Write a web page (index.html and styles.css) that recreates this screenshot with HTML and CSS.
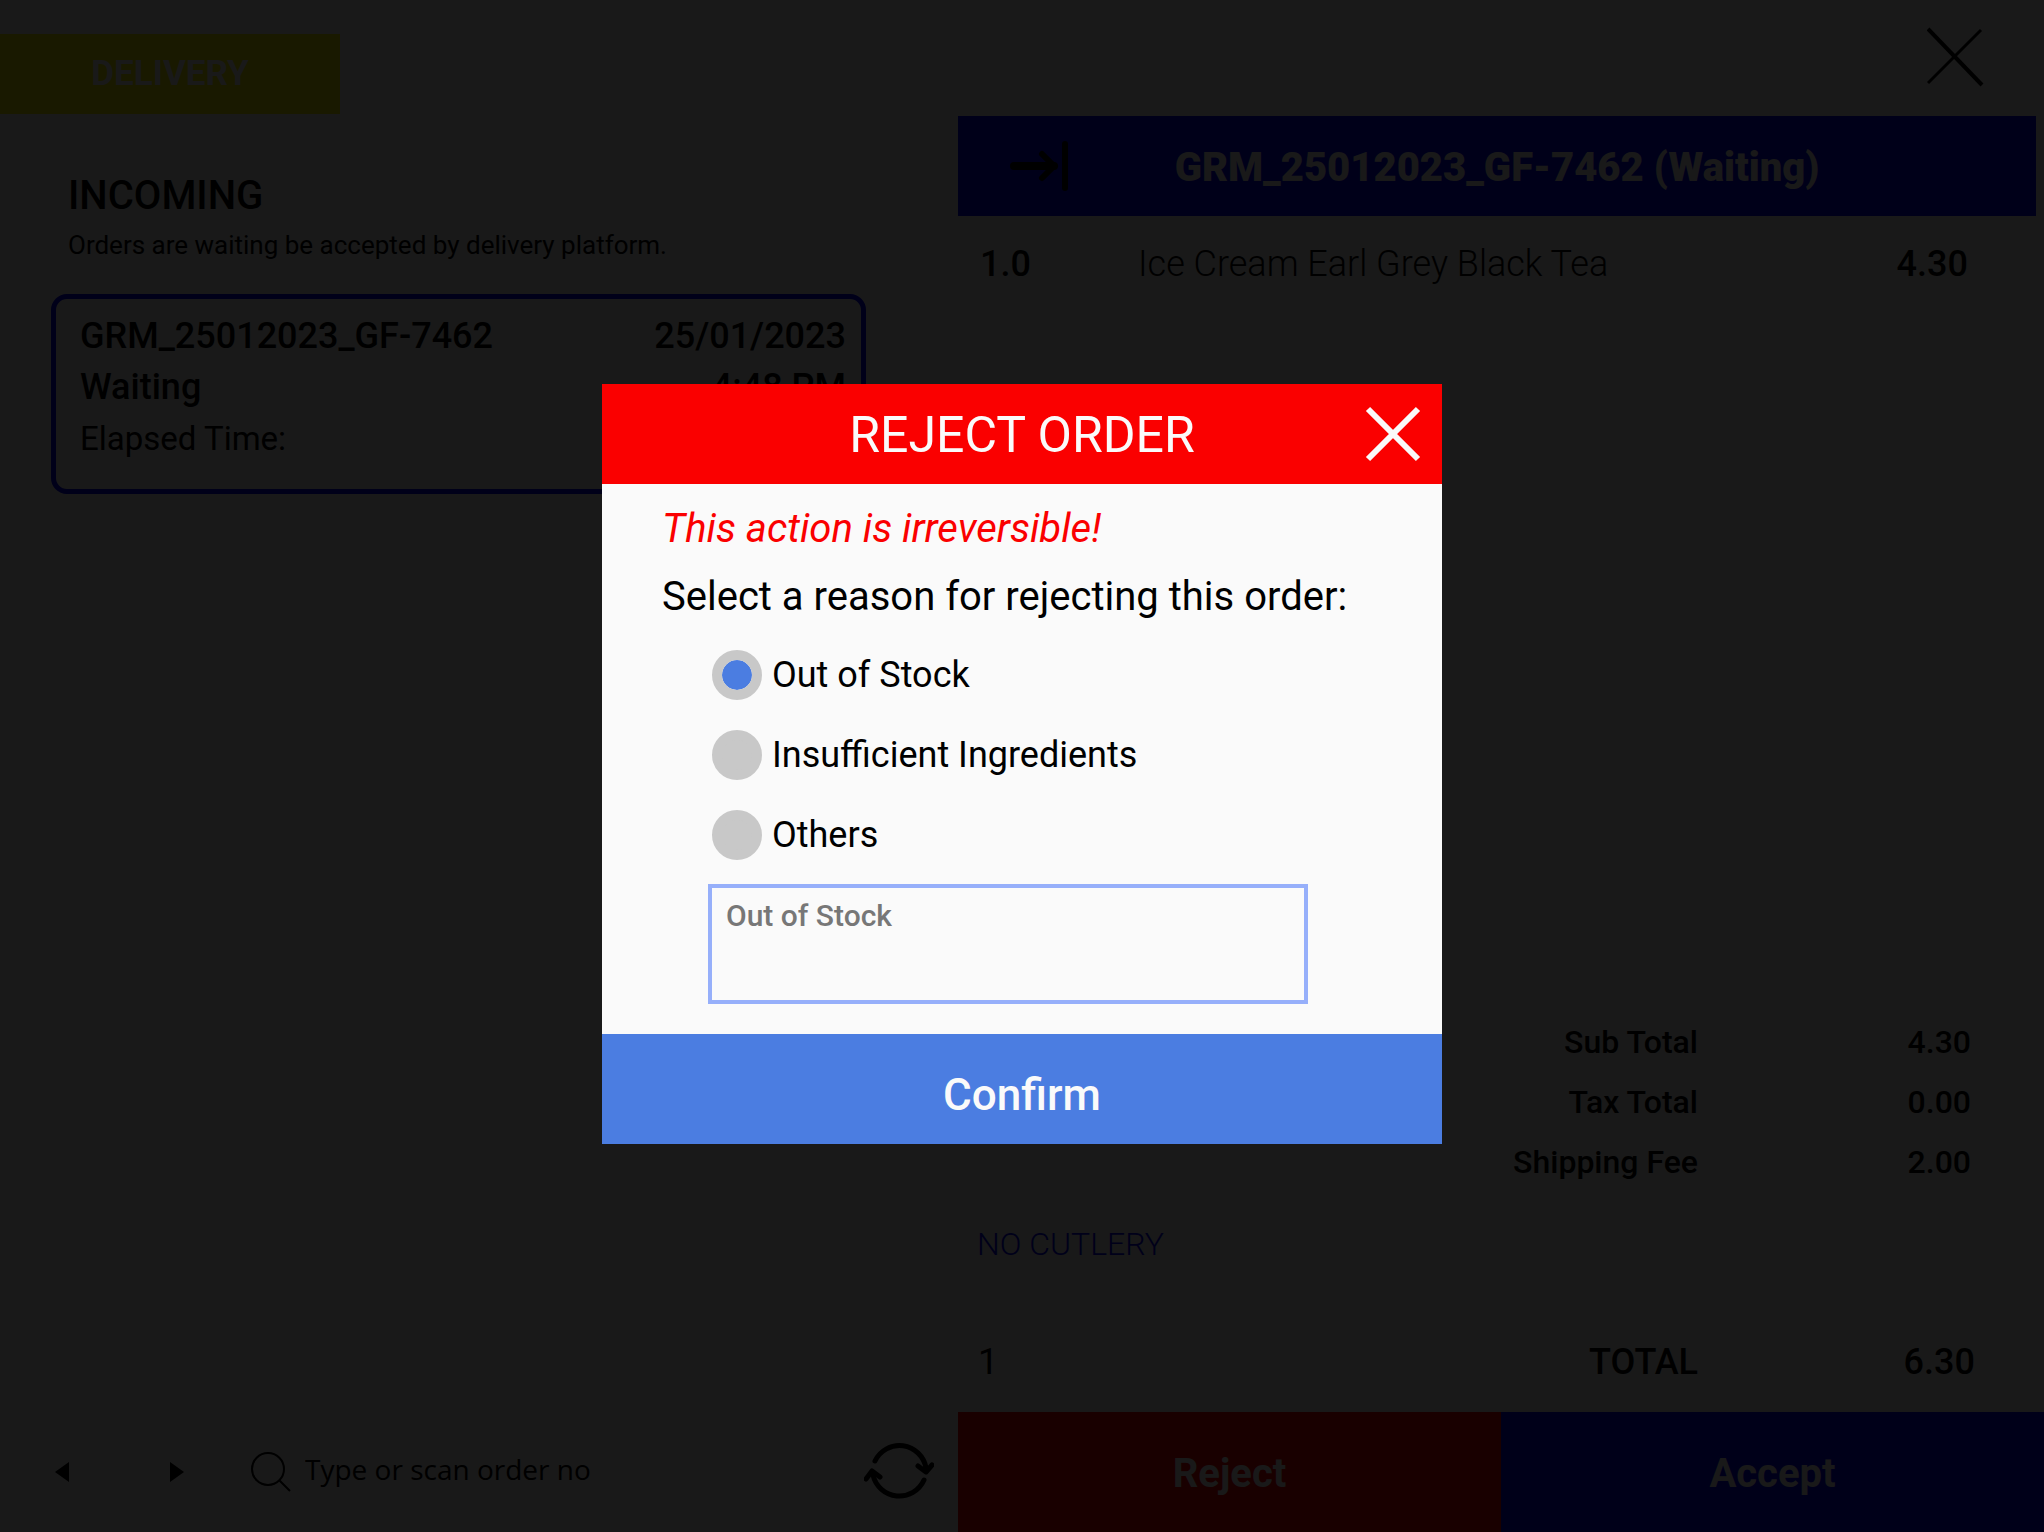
FILE: index.html
```html
<!DOCTYPE html>
<html lang="en">
<head>
<meta charset="utf-8">
<meta name="viewport" content="width=device-width, initial-scale=1">
<title>Delivery orders</title>
<link rel="stylesheet" href="styles.css">
</head>
<body>
<div class="app">
  <section class="orders">
    <h1 class="channel">DELIVERY</h1>
    <div class="incoming">
      <h2 class="incoming-title">INCOMING</h2>
      <p class="incoming-note">Orders are waiting be accepted by delivery platform.</p>
    </div>
    <article class="order-card">
      <div class="order-line"><span>GRM_25012023_GF-7462</span><span>25/01/2023</span></div>
      <div class="order-line"><span>Waiting</span><span>4:48 PM</span></div>
      <div class="order-line order-elapsed"><span>Elapsed Time:</span></div>
    </article>
    <div class="toolbar">
      <button class="page-button" type="button" aria-label="Previous page">
        <svg width="14" height="20" viewBox="0 0 14 20"><path d="M14 0v20L0 10z"/></svg>
      </button>
      <button class="page-button" type="button" aria-label="Next page">
        <svg width="14" height="20" viewBox="0 0 14 20"><path d="M0 0v20l14-10z"/></svg>
      </button>
      <label class="search">
        <svg width="42" height="42" viewBox="0 0 42 42" fill="none" stroke="#000" stroke-width="2"><circle cx="17" cy="18" r="16"/><path d="M28 29l11 11"/></svg>
        <input class="search-input" type="text" placeholder="Type or scan order no" aria-label="Order number">
      </label>
      <button class="refresh" type="button" aria-label="Refresh">
        <svg width="70" height="62" viewBox="0 0 70 62" fill="none" stroke="#000" stroke-width="5" stroke-linecap="round" stroke-linejoin="round"><path d="M11 20A27 27 0 0 1 62 27"/><path d="M54 25l8 6 6-7"/><path d="M60 39A27 27 0 0 1 9 34"/><path d="M2 38l6-8 8 6"/></svg>
      </button>
    </div>
  </section>

  <section class="detail">
    <div class="detail-top">
      <button class="close-page" type="button" aria-label="Close">
        <svg width="58" height="60" viewBox="0 0 58 60" stroke="#000" stroke-width="4"><path d="M1 2l54 56"/><path d="M54 3L1 56" stroke-width="3"/></svg>
      </button>
    </div>
    <header class="detail-header">
      <button class="collapse" type="button" aria-label="Collapse">
        <svg width="62" height="54" viewBox="0 0 62 54" fill="none" stroke="#000" stroke-width="6" stroke-linecap="round"><path d="M6 27h40" stroke-width="8"/><path d="M34 15l12 12-12 12"/><path d="M57 5v44"/></svg>
      </button>
      <h2 class="detail-title">GRM_25012023_GF-7462 (Waiting)</h2>
    </header>
    <div class="item">
      <span>1.0</span>
      <span class="item-name">Ice Cream Earl Grey Black Tea</span>
      <span class="item-price">4.30</span>
    </div>
    <div class="summary">
      <table class="totals">
        <tr><th scope="row">Sub Total</th><td>4.30</td></tr>
        <tr><th scope="row">Tax Total</th><td>0.00</td></tr>
        <tr><th scope="row">Shipping Fee</th><td>2.00</td></tr>
      </table>
      <p class="cutlery">NO CUTLERY</p>
      <div class="grand">
        <span class="grand-count">1</span><span>TOTAL</span><span class="grand-value">6.30</span>
      </div>
    </div>
    <div class="actions">
      <button class="action action-reject" type="button">Reject</button>
      <button class="action action-accept" type="button">Accept</button>
    </div>
  </section>
</div>

<div class="backdrop">
  <form class="dialog" role="dialog" aria-modal="true" aria-labelledby="dialog-title">
    <header class="dialog-header">
      <h2 class="dialog-title" id="dialog-title">REJECT ORDER</h2>
      <button class="dialog-close" type="button" aria-label="Close dialog">
        <svg width="56" height="56" viewBox="0 0 56 56" stroke="#fafafa" stroke-width="6"><path d="M3 3l50 50M53 3L3 53"/></svg>
      </button>
    </header>
    <div class="dialog-body">
      <p class="warning">This action is irreversible!</p>
      <fieldset class="reasons">
        <legend class="prompt">Select a reason for rejecting this order:</legend>
        <label class="reason"><input class="radio" type="radio" name="reason" checked>Out of Stock</label>
        <label class="reason"><input class="radio" type="radio" name="reason">Insufficient Ingredients</label>
        <label class="reason"><input class="radio" type="radio" name="reason">Others</label>
      </fieldset>
      <textarea class="remark" aria-label="Reason details">Out of Stock</textarea>
    </div>
    <button class="confirm" type="button">Confirm</button>
  </form>
</div>
</body>
</html>
```
FILE: styles.css
```css
* { box-sizing: border-box; }

body {
  margin: 0;
  background: #fafafa;
  color: #000;
  font-family: Roboto, "Liberation Sans", sans-serif;
  font-size: 36px;
}

h1, h2, p { margin: 0; font-size: inherit; }

button {
  padding: 0;
  border: 0;
  background: none;
  color: inherit;
  font: inherit;
}

svg { display: block; }

.app {
  display: grid;
  grid-template-columns: 958fr 1086fr;
  min-height: 100vh;
}

/* Order list */
.orders {
  display: flex;
  flex-direction: column;
  padding-top: 34px;
}

.channel {
  width: 340px;
  background: #fafa00;
  color: #fafafa;
  font-size: 35px;
  font-weight: 700;
  line-height: 80px;
  text-align: center;
}

.incoming { padding: 56px 68px 0; }

.incoming-title {
  font-size: 40px;
  font-weight: 500;
  line-height: 52px;
}

.incoming-note {
  font-size: 26px;
  line-height: 46px;
}

.order-card {
  height: 200px;
  margin: 26px 92px 0 51px;
  padding: 12px 15px 0 24px;
  border: 5px solid #0000fa;
  border-radius: 16px;
}

.order-line {
  display: flex;
  justify-content: space-between;
  font-weight: 500;
  line-height: 51px;
}

.order-elapsed { font-size: 33px; font-weight: 400; }

.toolbar {
  display: flex;
  align-items: center;
  height: 120px;
  margin-top: auto;
  padding: 0 24px 0 55px;
}

.page-button { width: 14px; margin-right: 101px; }

.search {
  display: flex;
  flex: 1;
  align-items: center;
  gap: 12px;
  margin-left: -34px;
}

.search-input {
  flex: 1;
  min-width: 0;
  padding: 0 0 6px;
  border: 0;
  background: none;
  font-family: "Open Sans", sans-serif;
  font-size: 28px;
}

.search-input::placeholder { color: #000; opacity: 1; }

/* Order detail */
.detail { display: flex; flex-direction: column; }

.detail-top {
  display: flex;
  justify-content: flex-end;
  height: 116px;
  padding: 27px 59px 0 0;
}

.close-page { height: 60px; }

.detail-header {
  display: grid;
  grid-template-columns: 1fr auto 1fr;
  align-items: center;
  height: 100px;
  margin-right: 8px;
  padding: 0 50px;
  background: #0000fa;
  color: #fafafa;
}

.collapse { justify-self: start; }

.detail-title {
  padding-top: 2px;
  font-size: 40px;
  font-weight: 900;
}

.item {
  display: grid;
  grid-template-columns: 158px 1fr auto;
  padding: 20px 76px 0 22px;
  font-weight: 500;
  line-height: 56px;
}

.item-name { font-weight: 300; }

.summary { margin-top: auto; padding-bottom: 20px; }

.totals {
  width: 100%;
  border-collapse: collapse;
  font-size: 32px;
  line-height: 60px;
}

.totals th, .totals td { padding: 0; font-weight: 500; text-align: right; }

.totals td { width: 346px; padding-right: 73px; }

.cutlery {
  padding: 22px 19px 0;
  color: #0000fa;
  font-size: 32px;
  font-weight: 300;
  line-height: 60px;
}

.grand {
  display: grid;
  grid-template-columns: 1fr auto 346px;
  padding: 58px 0 0 20px;
  font-weight: 500;
  line-height: 60px;
}

.grand-count { font-weight: 400; }

.grand-value { padding-right: 69px; text-align: right; }

.actions { display: grid; grid-template-columns: 1fr 1fr; }

.action {
  height: 120px;
  padding-top: 2px;
  color: #fafafa;
  font-size: 40px;
  font-weight: 700;
}

.action-reject { background: #fa0000; }
.action-accept { background: #0000fa; }

/* Reject dialog */
.backdrop {
  position: fixed;
  inset: 0;
  display: grid;
  place-items: center;
  padding-bottom: 4px;
  background: rgba(0, 0, 0, 0.9);
}

.dialog {
  width: 840px;
  max-width: 100%;
  background: #fafafa;
}

.dialog-header {
  display: grid;
  grid-template-columns: 1fr auto 1fr;
  align-items: center;
  height: 100px;
  padding: 0 21px;
  background: #fa0000;
  color: #fafafa;
}

.dialog-title {
  grid-column: 2;
  padding-top: 2px;
  font-size: 50px;
  font-weight: 400;
}

.dialog-close { justify-self: end; }

.dialog-body { padding: 12px 60px 30px; }

.warning, .prompt {
  padding: 0;
  font-size: 40px;
  line-height: 66px;
}

.warning { color: #fa0000; font-style: italic; }

.reasons { margin: 0; padding: 0; border: 0; }

.prompt { padding-top: 2px; margin-bottom: 5px; }

.reason {
  display: flex;
  align-items: center;
  gap: 10px;
  height: 80px;
  padding-left: 50px;
}

.radio {
  width: 50px;
  height: 50px;
  margin: 0;
  border: 10px solid #c8c8c8;
  border-radius: 50%;
  background: #c8c8c8;
  appearance: none;
}

.radio:checked { background: #4b7de1; background-clip: padding-box; }

.remark {
  display: block;
  width: 600px;
  height: 120px;
  margin: 9px 0 0 46px;
  padding: 10px 14px;
  border: 4px solid #96affa;
  background: none;
  color: #777;
  font: 500 30px/36px Roboto, "Liberation Sans", sans-serif;
  resize: none;
}

.confirm {
  display: block;
  width: 100%;
  height: 110px;
  padding-top: 12px;
  background: #4b7de1;
  color: #fafafa;
  font-size: 44px;
  font-weight: 500;
}
```
